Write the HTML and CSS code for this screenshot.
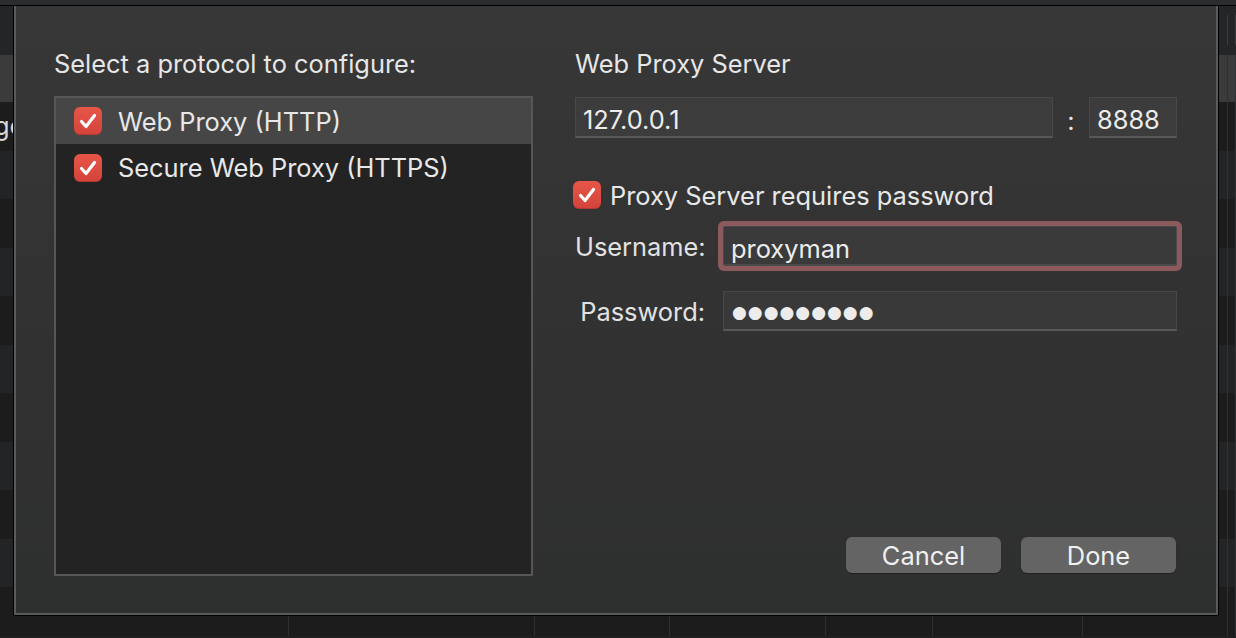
FILE: index.html
```html
<!DOCTYPE html>
<html lang="en">
<head>
    <meta charset="UTF-8">
    <meta name="viewport" content="width=device-width, initial-scale=1.0">
    <title>Proxy Settings</title>
    <link rel="stylesheet" href="styles.css">
</head>
<body>
    <div class="app">
        <div class="titlebar"></div>
        <div class="table">
            <div class="row head"><span></span><span></span><span></span><span></span><span></span><span></span><span></span><span></span></div>
            <div class="row selected"><span></span><span></span><span></span><span></span><span></span><span></span><span></span><span></span></div>
            <div class="row"><span class="cell-text">go</span><span></span><span></span><span></span><span></span><span></span><span></span><span></span></div>
            <div class="row"><span></span><span></span><span></span><span></span><span></span><span></span><span></span><span></span></div>
            <div class="row"><span></span><span></span><span></span><span></span><span></span><span></span><span></span><span></span></div>
            <div class="row"><span></span><span></span><span></span><span></span><span></span><span></span><span></span><span></span></div>
            <div class="row"><span></span><span></span><span></span><span></span><span></span><span></span><span></span><span></span></div>
            <div class="row"><span></span><span></span><span></span><span></span><span></span><span></span><span></span><span></span></div>
            <div class="row"><span></span><span></span><span></span><span></span><span></span><span></span><span></span><span></span></div>
            <div class="row"><span></span><span></span><span></span><span></span><span></span><span></span><span></span><span></span></div>
            <div class="row"><span></span><span></span><span></span><span></span><span></span><span></span><span></span><span></span></div>
            <div class="row"><span></span><span></span><span></span><span></span><span></span><span></span><span></span><span></span></div>
            <div class="row"><span></span><span></span><span></span><span></span><span></span><span></span><span></span><span></span></div>
        </div>
    </div>

    <div class="sheet">
        <div class="col-left">
            <p class="heading">Select a protocol to configure:</p>
            <ul class="protocols">
                <li class="selected">
                    <span class="checkbox"><svg viewBox="0 0 28 28" width="28" height="28"><path d="M7.5 14.5 L12 19.5 L20.5 8.5" fill="none" stroke="#fff" stroke-width="3.2" stroke-linecap="round" stroke-linejoin="round"/></svg></span>
                    Web Proxy (HTTP)
                </li>
                <li>
                    <span class="checkbox"><svg viewBox="0 0 28 28" width="28" height="28"><path d="M7.5 14.5 L12 19.5 L20.5 8.5" fill="none" stroke="#fff" stroke-width="3.2" stroke-linecap="round" stroke-linejoin="round"/></svg></span>
                    Secure Web Proxy (HTTPS)
                </li>
            </ul>
        </div>

        <div class="col-right">
            <p class="heading">Web Proxy Server</p>
            <div class="server-row">
                <div class="field host">127.0.0.1</div>
                <span class="colon">:</span>
                <div class="field port">8888</div>
            </div>

            <div class="check-row">
                <span class="checkbox"><svg viewBox="0 0 28 28" width="28" height="28"><path d="M7.5 14.5 L12 19.5 L20.5 8.5" fill="none" stroke="#fff" stroke-width="3.2" stroke-linecap="round" stroke-linejoin="round"/></svg></span>
                Proxy Server requires password
            </div>

            <div class="auth-grid">
                <span class="label">Username:</span>
                <div class="field focused">proxyman</div>
                <span class="label">Password:</span>
                <div class="field secret">●●●●●●●●●</div>
            </div>

            <div class="buttons">
                <button class="btn">Cancel</button>
                <button class="btn">Done</button>
            </div>
        </div>
    </div>
</body>
</html>
```

FILE: styles.css
```css
* {
    margin: 0;
    padding: 0;
    box-sizing: border-box;
}

body {
    width: 1236px;
    height: 638px;
    overflow: hidden;
    background: #1f2021;
    font-family: 'Inter', 'Liberation Sans', sans-serif;
    color: #e8e8e8;
    position: relative;
}

/* app window behind the sheet */
.titlebar {
    height: 6px;
    background: #2b2c2d;
    border-bottom: 1px solid #000;
}

.row {
    display: grid;
    grid-template-columns: 289px 246px 135px 156px 107px 150px 145px 1fr;
    height: 48.5px;
    background: #232425;
}

.row:nth-child(odd) {
    background: #1c1c1d;
}

.row span {
    border-right: 1px solid #2f3031;
}

.row.head {
    height: 49px;
    background: #242526;
}

.row.head span {
    margin: 9px 0 10px;
    border-right-color: #3a3b3c;
}

.row.selected {
    height: 47px;
    background: #3b3b3b;
}

.cell-text {
    font-size: 25.4px;
    line-height: 48px;
    margin-left: -6px;
    color: #d8d8d8;
}

/* the modal sheet */
.sheet {
    position: absolute;
    left: 14px;
    top: 6px;
    width: 1204px;
    height: 609px;
    display: flex;
    gap: 42px;
    padding: 43px 39px 37px 38px;
    background: linear-gradient(180deg, #373737 0%, #323232 50%, #2e2f2f 100%);
    border: 2px solid #5a5a5a;
    border-top: none;
    box-shadow: 0 0 0 1px #000;
}

.heading {
    font-size: 25.4px;
    line-height: 30px;
    color: #e6e6e6;
}

.col-left {
    width: 479px;
    display: flex;
    flex-direction: column;
}

.protocols {
    list-style: none;
    margin-top: 17px;
    flex: 1;
    background: #232323;
    border: 2px solid #565656;
}

.protocols li {
    display: flex;
    align-items: center;
    gap: 16px;
    height: 47px;
    padding-left: 18px;
    font-size: 25.4px;
    color: #e8e8e8;
}

.protocols li.selected {
    height: 46px;
    background: #464646;
}

.checkbox {
    display: inline-flex;
    width: 28px;
    height: 28px;
    border-radius: 6px;
    background: linear-gradient(180deg, #e65648 0%, #d4433a 100%);
    box-shadow: inset 0 -1px 0 rgba(0, 0, 0, 0.15);
    flex-shrink: 0;
}

.col-right {
    flex: 1;
    display: flex;
    flex-direction: column;
}

.server-row {
    display: flex;
    margin-top: 18px;
    height: 41px;
}

.field {
    height: 41px;
    background: #3c3c3c;
    border: 1px solid #484848;
    border-bottom: 2px solid #585858;
    font-size: 25.4px;
    line-height: 36px;
    padding: 4px 0 0 7px;
    color: #ececec;
}

.host {
    flex: 1;
}

.colon {
    width: 36px;
    text-align: center;
    font-size: 25.4px;
    line-height: 41px;
    padding-top: 3px;
}

.port {
    width: 88px;
}

.check-row {
    display: flex;
    align-items: center;
    gap: 9px;
    margin-top: 43px;
    margin-left: -2px;
    height: 28px;
    font-size: 25.4px;
}

.auth-grid {
    display: grid;
    grid-template-columns: 130px 1fr;
    column-gap: 18px;
    row-gap: 24px;
    margin-top: 17px;
}

.label {
    text-align: right;
    font-size: 25.4px;
    line-height: 40px;
    padding-top: 1px;
    color: #e2e2e2;
}

.auth-grid .field {
    height: 40px;
    line-height: 35px;
}

.field.focused {
    background: #3a3a3a;
    border-color: #4a4a4a;
    box-shadow: 0 0 0 5px #8c5a5d;
    border-radius: 2px;
}

.field.secret {
    background: #393939;
    font-family: 'DejaVu Sans', sans-serif;
    font-size: 17px;
    letter-spacing: 1px;
    padding: 3px 0 0 8px;
}

.buttons {
    display: flex;
    justify-content: flex-end;
    gap: 20px;
    margin-top: auto;
    margin-bottom: 3px;
    padding-right: 1px;
}

.btn {
    width: 155px;
    height: 36px;
    border: none;
    border-radius: 6px;
    background: #646464;
    color: #f0f0f0;
    font-family: 'Inter', 'Liberation Sans', sans-serif;
    font-size: 25.4px;
    box-shadow: 0 1px 1px rgba(0, 0, 0, 0.3);
}
```
